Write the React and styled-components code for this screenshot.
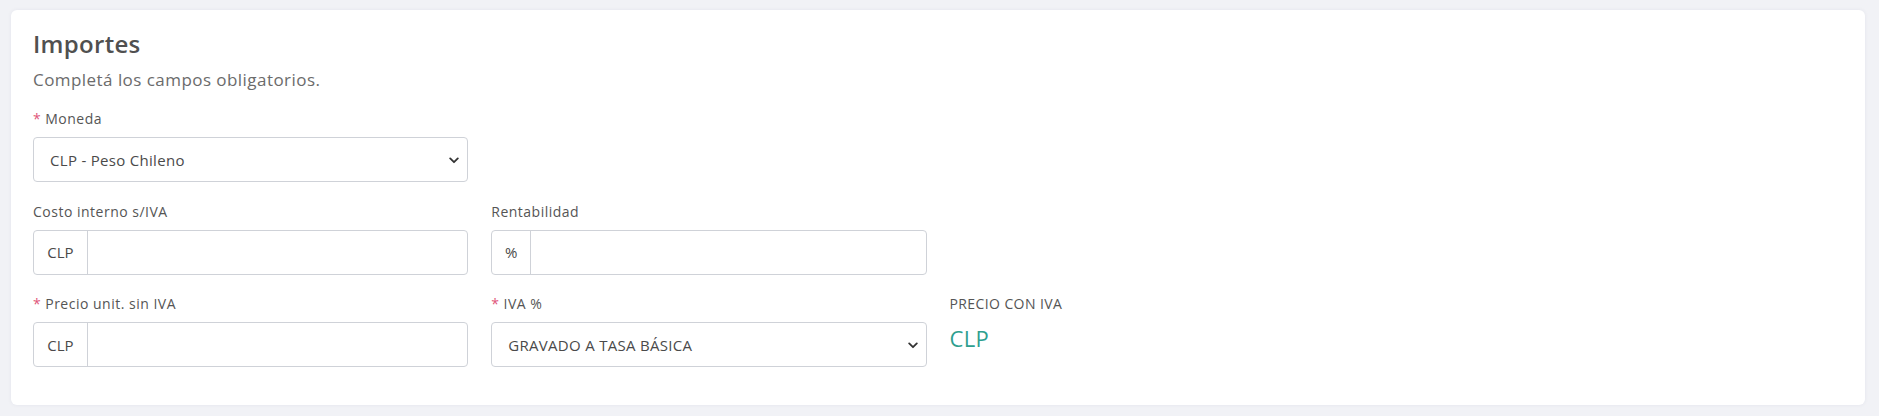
import React from "react";
import styled, { createGlobalStyle } from "styled-components";

const GlobalStyle = createGlobalStyle`
  html, body {
    margin: 0;
    padding: 0;
    background: #f1f2f6;
  }
  body {
    font-family: "Open Sans", "Noto Sans", sans-serif;
    color: #555;
  }
  * { box-sizing: border-box; }
`;

const Page = styled.div`
  padding: 10px 14px 10px 11px;
`;

const Card = styled.section`
  background: #fff;
  border-radius: 6px;
  box-shadow: 0 0 4px rgba(30, 40, 80, 0.06);
  padding: 19px 22px 38px;
`;

const Title = styled.h2`
  margin: 0;
  font-size: 24px;
  line-height: 30px;
  font-weight: 600;
  color: #505050;
  letter-spacing: 0.3px;
`;

const Subtitle = styled.p`
  margin: 9px 0 0;
  font-size: 17px;
  line-height: 24px;
  color: #6b6b6b;
  letter-spacing: 0.45px;
`;

const Grid = styled.div`
  display: grid;
  grid-template-columns: repeat(4, 1fr);
  column-gap: 23px;
  row-gap: 19.5px;
  margin-top: 17px;
`;

const Field = styled.div`
  display: flex;
  flex-direction: column;
  grid-column: ${(p) => p.$col || "auto"};
`;

const Label = styled.label`
  font-size: 14px;
  line-height: 20px;
  color: #555;
  margin-bottom: 8px;
  letter-spacing: ${(p) => (p.$upper ? "0.4px" : "0.5px")};
  text-transform: ${(p) => (p.$upper ? "uppercase" : "none")};
`;

const Star = styled.span`
  color: #e0557a;
  margin-right: 4px;
`;

const SelectBox = styled.div`
  position: relative;
  height: 45px;
  border: 1px solid #cfd2d8;
  border-radius: 4px;
  display: flex;
  align-items: center;
  padding: 0 16px;
  font-size: 15px;
  color: #4a4a4a;
  letter-spacing: 0.3px;
  text-transform: ${(p) => (p.$upper ? "uppercase" : "none")};
`;

const Chevron = styled.svg`
  position: absolute;
  right: 8px;
  top: 50%;
  margin-top: -3px;
`;

const InputGroup = styled.div`
  display: flex;
  height: 45px;
  border: 1px solid #cfd2d8;
  border-radius: 4px;
`;

const Addon = styled.span`
  display: flex;
  align-items: center;
  justify-content: center;
  width: ${(p) => p.$w}px;
  border-right: 1px solid #cfd2d8;
  font-size: 15px;
  color: #4a4a4a;
`;

const Input = styled.input`
  flex: 1;
  border: 0;
  outline: 0;
  background: transparent;
  font: inherit;
  min-width: 0;
`;

const Amount = styled.div`
  font-size: 22px;
  line-height: 28px;
  color: #2e9f8f;
  margin-top: 2px;
  letter-spacing: 0.3px;
`;

function ChevronIcon() {
  return (
    <Chevron width="10" height="7" viewBox="0 0 10 7" fill="none">
      <path d="M1.2 1.4 5 5.2 8.8 1.4" stroke="#333" strokeWidth="1.8" strokeLinecap="round" strokeLinejoin="round" />
    </Chevron>
  );
}

function Select({ children, upper }) {
  return (
    <SelectBox $upper={upper}>
      {children}
      <ChevronIcon />
    </SelectBox>
  );
}

function AddonInput({ addon, width }) {
  return (
    <InputGroup>
      <Addon $w={width}>{addon}</Addon>
      <Input type="text" />
    </InputGroup>
  );
}

export default function App() {
  return (
    <>
      <GlobalStyle />
      <Page>
        <Card>
          <Title>Importes</Title>
          <Subtitle>Completá los campos obligatorios.</Subtitle>
          <Grid>
            <Field $col="1 / 2">
              <Label><Star>*</Star>Moneda</Label>
              <Select>CLP - Peso Chileno</Select>
            </Field>
            <Field $col="1 / 2">
              <Label>Costo interno s/IVA</Label>
              <AddonInput addon="CLP" width={54} />
            </Field>
            <Field>
              <Label>Rentabilidad</Label>
              <AddonInput addon="%" width={39} />
            </Field>
            <Field $col="1 / 2">
              <Label><Star>*</Star>Precio unit. sin IVA</Label>
              <AddonInput addon="CLP" width={54} />
            </Field>
            <Field>
              <Label><Star>*</Star>IVA %</Label>
              <Select upper>Gravado a tasa básica</Select>
            </Field>
            <Field>
              <Label $upper>Precio con IVA</Label>
              <Amount>CLP</Amount>
            </Field>
          </Grid>
        </Card>
      </Page>
    </>
  );
}
